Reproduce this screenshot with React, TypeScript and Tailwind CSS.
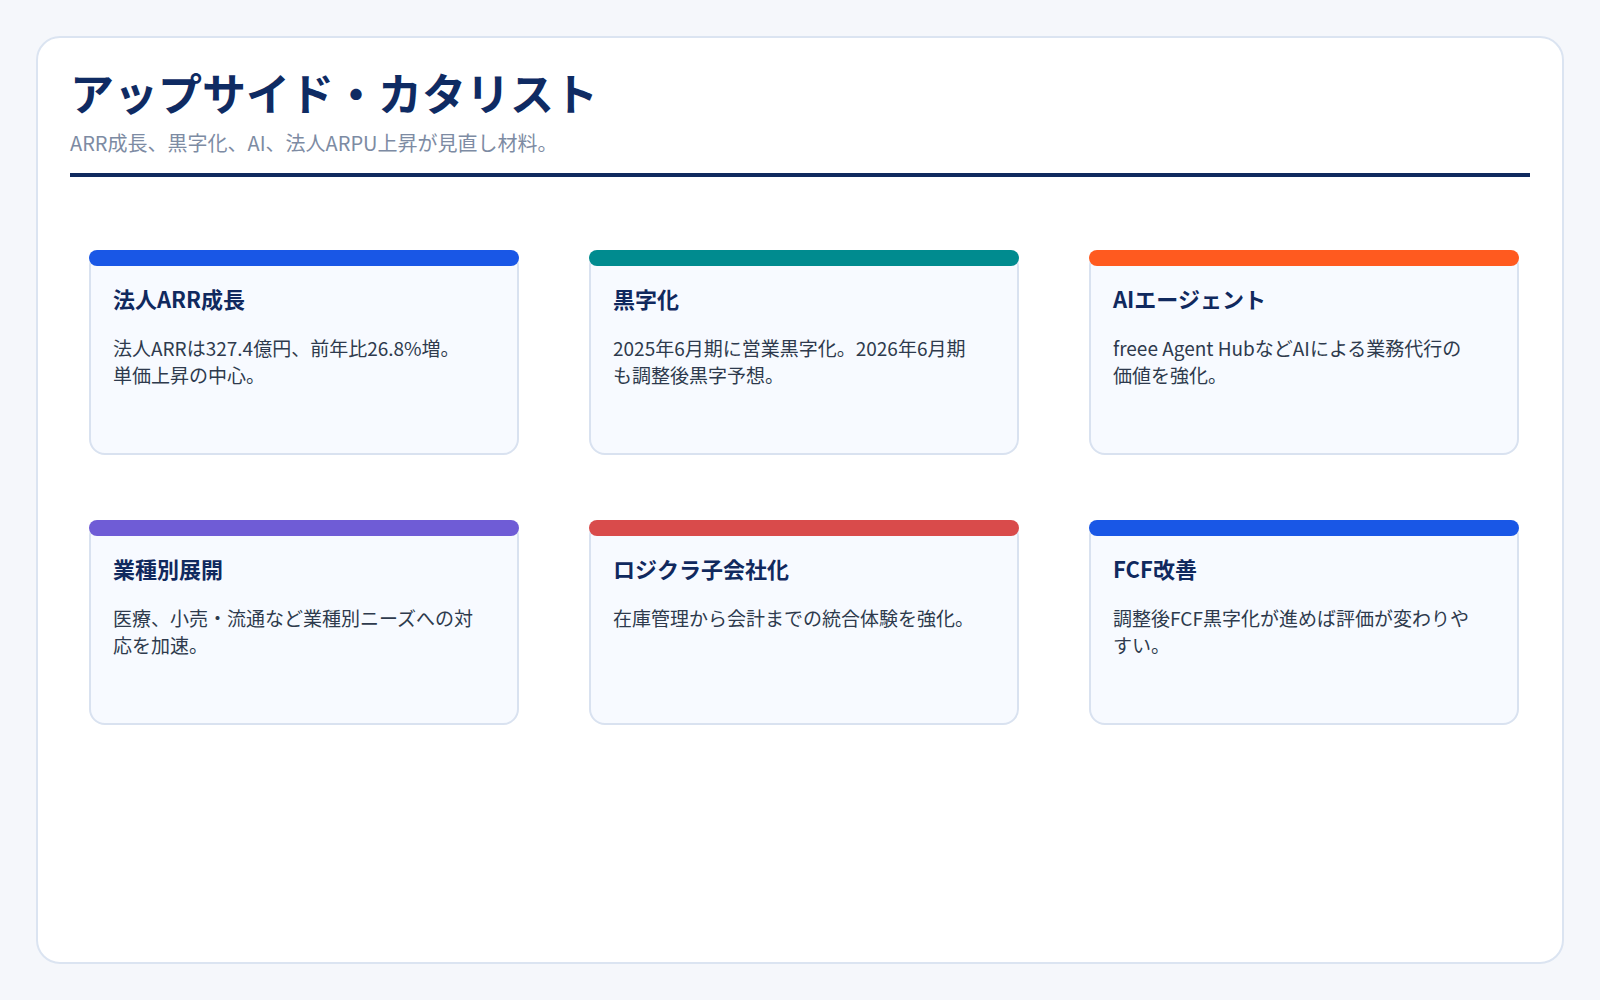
const catalysts = [
  {
    title: '法人ARR成長',
    body: ['法人ARRは327.4億円、前年比26.8%増。', '単価上昇の中心。'],
    bar: 'bg-[#1957e6]',
  },
  {
    title: '黒字化',
    body: ['2025年6月期に営業黒字化。2026年6月期', 'も調整後黒字予想。'],
    bar: 'bg-[#008b8f]',
  },
  {
    title: 'AIエージェント',
    body: ['freee Agent HubなどAIによる業務代行の', '価値を強化。'],
    bar: 'bg-[#ff5a1f]',
  },
  {
    title: '業種別展開',
    body: ['医療、小売・流通など業種別ニーズへの対', '応を加速。'],
    bar: 'bg-[#6f5cd6]',
  },
  {
    title: 'ロジクラ子会社化',
    body: ['在庫管理から会計までの統合体験を強化。'],
    bar: 'bg-[#d94b4b]',
  },
  {
    title: 'FCF改善',
    body: ['調整後FCF黒字化が進めば評価が変わりや', 'すい。'],
    bar: 'bg-[#1957e6]',
  },
];

function CatalystCard({ title, body, bar }: { title: string; body: string[]; bar: string }) {
  return (
    <div className="h-[205px] rounded-2xl border-2 border-[#d9e2f0] bg-[#f7faff]">
      {/* colour strip */}
      <div className={`-mx-[2px] -mt-[2px] h-4 rounded-lg ${bar}`} />
      <div className="pl-[22px] pr-[30px] pt-[17px]">
        <h3 className="text-[22px] font-bold leading-[31px] text-[#10295e]">{title}</h3>
        <p className="mt-[21px] text-[19px] leading-[26.5px] text-[#2e3a4d]">
          {body.map((line, i) => (
            <span key={i} className="block whitespace-nowrap">
              {line}
            </span>
          ))}
        </p>
      </div>
    </div>
  );
}

export default function App() {
  return (
    <div
      className="min-h-screen bg-[#f5f7fb] p-9"
      style={{ fontFamily: '"Noto Sans CJK JP", "Noto Sans", sans-serif' }}
    >
      <div className="h-[928px] rounded-3xl border-2 border-[#dbe4f1] bg-white px-8 pt-[28px]">
        {/* Header */}
        <h1 className="text-[44px] font-bold leading-[53px] text-[#0f2b63]">
          アップサイド・カタリスト
        </h1>
        <p className="mt-[10px] text-[20px] leading-[28px] text-[#7d8ba3]">
          ARR成長、黒字化、AI、法人ARPU上昇が見直し材料。
        </p>
        <div className="mt-[16px] h-1 bg-[#0f2a5f]" />

        {/* Cards */}
        <div className="ml-[19px] mt-[73px] grid grid-cols-[repeat(3,430px)] gap-x-[70px] gap-y-[65px]">
          {catalysts.map((c) => (
            <CatalystCard key={c.title} {...c} />
          ))}
        </div>
      </div>
    </div>
  );
}
